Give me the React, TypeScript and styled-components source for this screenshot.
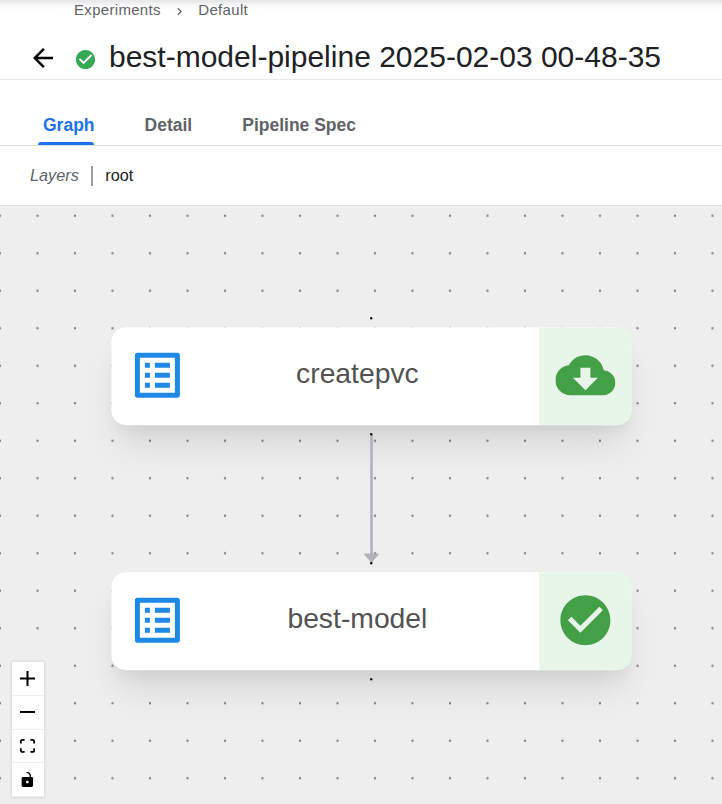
import React from 'react';
import styled, { createGlobalStyle } from 'styled-components';

const GlobalStyle = createGlobalStyle`
  * { box-sizing: border-box; }
  body {
    margin: 0;
    background: #fff;
    font-family: "Liberation Sans", Arial, sans-serif;
    overflow: hidden;
  }
`;

const Page = styled.main`
  display: flex;
  flex-direction: column;
  width: 722px;
  height: 804px;
  overflow: hidden;
`;

const Header = styled.header`
  display: flex;
  flex-direction: column;
  height: 80px;
  border-bottom: 1px solid #e8eaed;
  background: linear-gradient(#e5e6e8 0, #e9eaeb 2px, #f7f7f8 5px, #fff 10px);
`;

const Breadcrumbs = styled.nav`
  display: flex;
  align-items: center;
  height: 20px;
  padding-left: 74px;
  font-size: 15px;
  line-height: 20px;
  letter-spacing: 0.3125px;
  color: #5f6368;
`;

const Chevron = styled.svg`
  width: 15px;
  height: 15px;
  margin: 3px 11px 0 11.5px;
`;

const TitleRow = styled.div`
  display: flex;
  align-items: center;
  height: 59px;
  padding: 15px 0 0 28px;
`;

const TitleIcon = styled.svg<{ $size: number }>`
  width: ${({ $size }) => $size}px;
  height: ${({ $size }) => $size}px;
  margin-top: 2px;
  flex: none;
`;

const StatusIcon = styled(TitleIcon)`
  margin: 5px 12px 0 16px;
`;

const Title = styled.h1`
  margin: 0;
  font-size: 30px;
  font-weight: 400;
  line-height: 36px;
  color: #202124;
  white-space: nowrap;
`;

const Tabs = styled.div`
  display: flex;
  align-items: flex-end;
  height: 66px;
  padding-left: 38px;
  border-bottom: 1px solid #e0e0e0;
`;

const Tab = styled.div<{ $gap: number }>`
  height: 41px;
  margin-right: ${({ $gap }) => $gap}px;
  font-size: 17.5px;
  font-weight: 700;
  line-height: 42px;
  white-space: nowrap;
  padding-left: 5px;
  color: #5f6368;
`;

const ActiveTab = styled(Tab)`
  color: #1a73e8;

  &::after {
    content: '';
    display: block;
    width: 56px;
    height: 3px;
    margin: -4px 0 0 -5px;
    border-radius: 3px 3px 0 0;
    background: #1a73e8;
  }
`;

const Layers = styled.div`
  display: flex;
  align-items: center;
  height: 60px;
  padding-left: 30px;
  border-bottom: 1px solid #e0e0e0;
  font-size: 16.25px;
  color: #202124;
`;

const LayersLabel = styled.em`
  height: 20px;
  padding-right: 12px;
  margin-right: 12.5px;
  line-height: 18px;
  border-right: 2px solid #9e9e9e;
  color: #5f6368;
`;

const Canvas = styled.section`
  position: relative;
  flex: 1;
  overflow: hidden;
  background: #eee;
`;

const Backdrop = styled.svg`
  position: absolute;
  inset: 0;
  width: 100%;
  height: 100%;
`;

const Node = styled.div<{ $top: number }>`
  position: absolute;
  left: 0;
  top: 0;
  transform: translate(111.4px, ${({ $top }) => $top}px);
  display: flex;
  width: 520px;
  height: 98px;
  border-radius: 15px;
  overflow: hidden;
  background: #fff;
  box-shadow: 0 25px 37.5px -7.5px rgba(0, 0, 0, 0.1), 0 10px 15px -5px rgba(0, 0, 0, 0.05);
`;

const NodeType = styled.div`
  display: flex;
  align-items: center;
  padding: 0 0 2px 16px;
`;

const NodeIcon = styled.svg`
  width: 60px;
  height: 60px;
  display: block;
`;

const NodeLabel = styled.div`
  flex: 1;
  padding-right: 12px;
  font-size: 28.3px;
  line-height: 93px;
  text-align: center;
  color: #525252;
`;

const NodeState = styled.div`
  display: flex;
  align-items: center;
  justify-content: center;
  width: 92px;
  padding-bottom: 2px;
  background: #e8f5e9;
`;

const Controls = styled.div`
  position: absolute;
  left: 12px;
  bottom: 7px;
  width: 32px;
  box-shadow: 0 0 2.5px 1px rgba(0, 0, 0, 0.08);
`;

const ControlButton = styled.button`
  display: flex;
  align-items: center;
  justify-content: center;
  width: 100%;
  height: 33.75px;
  padding: 0 1px 0 0;
  border: 0;
  border-bottom: 1px solid #eee;
  background: #fefefe;
`;

const ControlIcon = styled.svg`
  width: 15px;
  max-height: 15px;
  display: block;
`;

const CHECK =
  'M12 2C6.48 2 2 6.48 2 12s4.48 10 10 10 10-4.48 10-10S17.52 2 12 2zm-2 15l-5-5 1.41-1.41L10 14.17l7.59-7.59L19 8l-9 9z';
const CLOUD =
  'M19.35 10.04C18.67 6.59 15.64 4 12 4 9.11 4 6.6 5.64 5.35 8.04 2.34 8.36 0 10.91 0 14c0 3.31 2.69 6 6 6h13c2.76 0 5-2.24 5-5 0-2.64-2.05-4.78-4.65-4.96zM17 13l-5 5-5-5h3V9h4v4h3z';
const LIST =
  'M19 5v14H5V5h14m1.1-2H3.9c-.5 0-.9.4-.9.9v16.2c0 .4.4.9.9.9h16.2c.4 0 .9-.5.9-.9V3.9c0-.5-.5-.9-.9-.9zM11 7h6v2h-6V7zm0 4h6v2h-6v-2zm0 4h6v2h-6zM7 7h2v2H7zm0 4h2v2H7zm0 4h2v2H7z';

const controls = [
  { name: 'zoom in', box: '0 0 32 32', d: 'M32 18.133H18.133V32h-4.266V18.133H0v-4.266h13.867V0h4.266v13.867H32z' },
  { name: 'zoom out', box: '0 0 32 5', d: 'M0 0h32v4.2H0z' },
  {
    name: 'fit view',
    box: '0 0 32 30',
    d: 'M3.692 4.63c0-.53.4-.938.939-.938h5.215V0H4.708C2.13 0 0 2.054 0 4.63v5.216h3.692V4.631zM27.354 0h-5.2v3.692h5.17c.53 0 .984.4.984.939v5.215H32V4.631A4.624 4.624 0 0027.354 0zm.954 24.83c0 .532-.4.94-.939.94h-5.215v3.768h5.215c2.577 0 4.631-2.13 4.631-4.707v-5.139h-3.692v5.139zm-23.677.94c-.531 0-.939-.4-.939-.94v-5.138H0v5.139c0 2.577 2.13 4.707 4.708 4.707h5.138V25.77H4.631z',
  },
  {
    name: 'toggle interactivity',
    box: '0 0 25 32',
    d: 'M21.333 10.667H19.81V7.619C19.81 3.429 16.38 0 12.19 0c-4.114 1.828-1.37 2.133.305 2.438 1.676.305 4.42 2.59 4.42 5.181v3.048H3.047A3.056 3.056 0 000 13.714v15.238A3.056 3.056 0 003.048 32h18.285a3.056 3.056 0 003.048-3.048V13.714a3.056 3.056 0 00-3.048-3.047zM12.19 24.533a3.056 3.056 0 01-3.047-3.047 3.056 3.056 0 013.047-3.048 3.056 3.056 0 013.048 3.048 3.056 3.056 0 01-3.048 3.047z',
  },
];

const nodes = [
  { label: 'createpvc', top: 121.2, icon: CLOUD },
  { label: 'best-model', top: 366.2, icon: CHECK },
];

export default function App() {
  return (
    <Page>
      <GlobalStyle />
      <Header>
        <Breadcrumbs>
          <span>Experiments</span>
          <Chevron viewBox="0 0 24 24" fill="#5f6368">
            <path d="M10 6L8.59 7.41 13.17 12l-4.58 4.59L10 18l6-6z" />
          </Chevron>
          <span>Default</span>
        </Breadcrumbs>
        <TitleRow>
          <TitleIcon $size={30} viewBox="0 0 24 24" fill="#000">
            <path d="M20 11H7.83l5.59-5.59L12 4l-8 8 8 8 1.41-1.41L7.83 13H20v-2z" />
          </TitleIcon>
          <StatusIcon $size={23} viewBox="0 0 24 24" fill="#34a853">
            <path d={CHECK} />
          </StatusIcon>
          <Title>best-model-pipeline 2025-02-03 00-48-35</Title>
        </TitleRow>
      </Header>
      <Tabs>
        <ActiveTab $gap={45}>Graph</ActiveTab>
        <Tab $gap={45}>Detail</Tab>
        <Tab $gap={0}>Pipeline Spec</Tab>
      </Tabs>
      <Layers>
        <LayersLabel>Layers</LayersLabel>
        <span>root</span>
      </Layers>
      <Canvas>
        <Backdrop>
          <defs>
            <pattern id="dots" x="-18.75" y="-9" width="37.5" height="37.5" patternUnits="userSpaceOnUse">
              <circle cx="18.75" cy="18.75" r="1.2" fill="#81818a" />
            </pattern>
          </defs>
          <rect width="100%" height="100%" fill="url(#dots)" />
        </Backdrop>
        {nodes.map((node) => (
          <Node key={node.label} $top={node.top}>
            <NodeType>
              <NodeIcon viewBox="0 0 24 24" fill="#1e88e5">
                <path d={LIST} />
              </NodeIcon>
            </NodeType>
            <NodeLabel>{node.label}</NodeLabel>
            <NodeState>
              <NodeIcon viewBox="0 0 24 24" fill="#43a047">
                <path d={node.icon} />
              </NodeIcon>
            </NodeState>
          </Node>
        ))}
        <Backdrop>
          <path d="M371.5 228V357" stroke="#b1b1b7" strokeWidth="2.6" />
          <path d="M365 348.3h13l-6.5 7.2z" fill="#b1b1b7" stroke="#b1b1b7" strokeWidth="1.6" strokeLinejoin="round" />
          {[112, 228, 357, 473].map((y) => (
            <circle key={y} cx="371.2" cy={y + 0.2} r="1.2" fill="#111" />
          ))}
        </Backdrop>
        <Controls>
          {controls.map((control) => (
            <ControlButton key={control.name} aria-label={control.name}>
              <ControlIcon viewBox={control.box}>
                <path d={control.d} />
              </ControlIcon>
            </ControlButton>
          ))}
        </Controls>
      </Canvas>
    </Page>
  );
}
